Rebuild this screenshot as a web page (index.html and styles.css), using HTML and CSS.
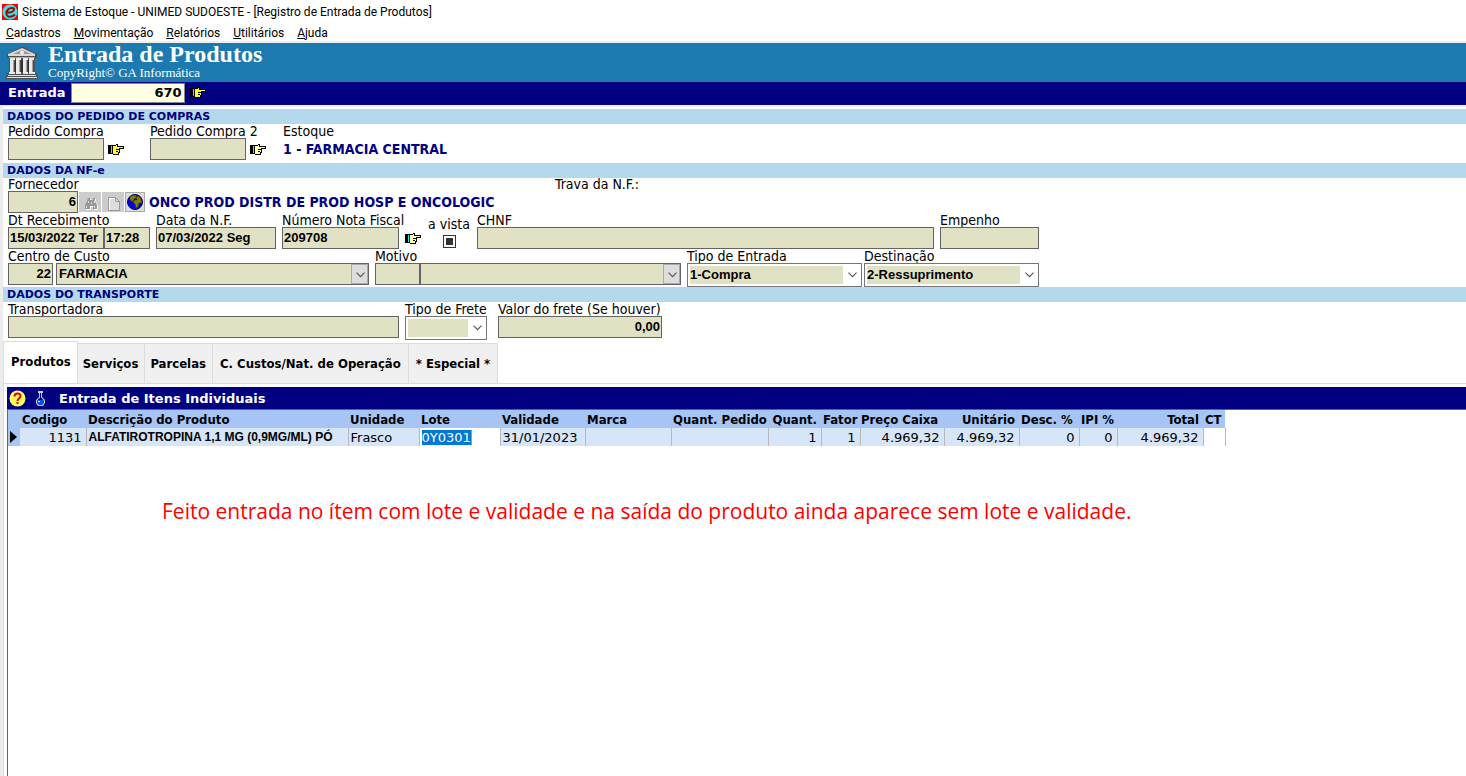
FILE: index.html
```html
<!DOCTYPE html>
<html lang="pt-BR">
<head>
<meta charset="utf-8">
<title>Sistema de Estoque - UNIMED SUDOESTE</title>
<link rel="stylesheet" href="styles.css">
</head>
<body>
<svg class="defs" aria-hidden="true">
  <symbol id="hand" viewBox="0 0 16 11">
    <path fill="#000" d="M0 1h5v9H0z"/><path fill="#0ff" d="M3 2h1v7H3z"/>
    <path fill="#000" d="M5 1h3V0h2v2h6v3h-4v4h-1v2H5z"/>
    <path fill="#ffff30" d="M5 2h3V1h1v2h6v1h-4v4h-1v2H5z"/>
    <path fill="#000" d="M8 5h3v1H8zM8 7h2v1H8z"/>
  </symbol>
  <symbol id="hand-pale" viewBox="0 0 16 11">
    <path fill="#000" d="M0 1h5v9H0z"/><path fill="#0ff" d="M3 2h1v7H3z"/>
    <path fill="#000" d="M5 1h3V0h2v2h6v3h-4v4h-1v2H5z"/>
    <path fill="#ffffb0" d="M5 2h3V1h1v2h6v1h-4v4h-1v2H5z"/>
    <path fill="#000" d="M8 5h3v1H8zM8 7h2v1H8z"/>
  </symbol>
  <symbol id="chevron" viewBox="0 0 9 6"><path d="M.5 .7l4 4 4-4" fill="none" stroke="#555" stroke-width="1.1"/></symbol>
</svg>

<header>
  <div class="titlebar">
    <svg width="16" height="16" viewBox="0 0 16 16"><path fill="#f00" d="M0 0h16v16H0z"/><circle cx="8" cy="8" r="7.500" fill="#40e0e0"/><path d="M5 8.500c4 .5 7-1 7-3.200 0-2-4-1.800-6 .2S3.500 11 6 12.300s5 0 7-1.800" fill="none" stroke="#8a1010" stroke-width="2"/></svg>
    <span>Sistema de Estoque - UNIMED SUDOESTE - [Registro de Entrada de Produtos]</span>
  </div>
  <nav class="menu">
    <button><u>C</u>adastros</button><button><u>M</u>ovimentação</button><button><u>R</u>elatórios</button><button><u>U</u>tilitários</button><button><u>A</u>juda</button>
  </nav>
  <div class="banner">
    <svg width="32" height="32" viewBox="0 0 32 32">
      <path fill="#505050" d="M15 0h3l13 7v4h-2v15h2l1 6H0l1-6h2V11H1V7z"/>
      <path fill="#d8d8d8" d="M16 1l13 6v2H2V7z"/><path fill="#999" d="M16 3l9 4H7z"/><circle cx="16" cy="5.500" r="2" fill="#eee"/>
      <path fill="#aaa" d="M3 10h26v1H3z"/>
      <path fill="#303030" d="M9 13h1v12H9zM15 13h2v12h-2zM22 13h1v12h-1z"/>
      <path fill="#eaeaea" d="M4 11h5v2H4zM10 11h5v2h-5zM17 11h5v2h-5zM23 11h5v2h-5zM4 13h3v12H4zM10 13h3v12h-3zM17 13h3v12h-3zM23 13h3v12h-3zM3 25h6v2H3zM10 25h5v2h-5zM17 25h5v2h-5zM23 25h6v2h-6z"/>
      <path fill="#a0a0a0" d="M7 13h1v12H7zM13 13h1v12h-1zM20 13h1v12h-1zM26 13h1v12h-1z"/>
      <path fill="#e0e0e0" d="M2 28h28v1H2zM1 30h30v1H1z"/>
    </svg>
    <div><h1>Entrada de Produtos</h1><p>CopyRight© GA Informática</p></div>
  </div>
  <div class="entry">
    <label for="entrada">Entrada</label>
    <input id="entrada" value="670">
    <button class="plain" aria-label="Buscar entrada"><svg width="16" height="11"><use href="#hand"/></svg></button>
  </div>
</header>

<main>
  <h2>DADOS DO PEDIDO DE COMPRAS</h2>
  <div class="row order">
    <div class="field"><label for="pc">Pedido Compra</label>
      <div class="group"><input id="pc"><button class="plain" aria-label="Buscar pedido"><svg width="16" height="11"><use href="#hand"/></svg></button></div></div>
    <div class="field"><label for="pc2">Pedido Compra 2</label>
      <div class="group"><input id="pc2"><button class="plain" aria-label="Buscar pedido 2"><svg width="16" height="11"><use href="#hand-pale"/></svg></button></div></div>
    <div class="field"><span>Estoque</span><div class="group"><strong>1 - FARMACIA CENTRAL</strong></div></div>
  </div>

  <h2>DADOS DA NF-e</h2>
  <div class="row supplier">
    <div class="field"><label for="forn">Fornecedor</label>
      <div class="group tools"><input id="forn" class="num" value="6">
        <button class="tool off" aria-label="Procurar" disabled><svg width="13" height="12" viewBox="0 0 13 12"><path fill="#fff" d="M4 1h2v2h2V1h3v3l2 4v4H9V9H6v3H1V7l2-3z"/><path fill="#999" d="M3 0h2v2h3V0h2v3l2 4v4H8V8H5v3H0V7l2-4z"/><path fill="#ddd" d="M3 3h1v2H3zM9 3h1v2H9zM1 8h1v2H1zM9 8h1v2H9zM6 4h1v2H6z"/></svg></button>
        <button class="tool off" aria-label="Novo" disabled><svg width="12" height="14" viewBox="0 0 12 14"><path fill="#ddd" stroke="#999" d="M.5 .5h7l4 4v9H.5z"/><path d="M7.500 .5v4h4" fill="none" stroke="#999"/><path d="M1.500 13V1.500H7" fill="none" stroke="#fff"/></svg></button>
        <button class="tool" aria-label="Consultar na internet"><svg width="16" height="16" viewBox="0 0 16 16"><circle cx="8" cy="8" r="7.500" fill="#0000e0" stroke="#000060"/><path fill="#808000" stroke="#303000" stroke-width=".5" d="M3 3l3-2 4 1-1 2-2 1-1 3-3-2zM9 3l3-1 2 3 1 4-3 0-1 4-2 1-1-4-2-2 2-2 2 0z"/></svg></button>
        <strong>ONCO PROD DISTR DE PROD HOSP E ONCOLOGIC</strong></div></div>
    <div class="field"><span>Trava da N.F.:</span></div>
  </div>
  <div class="row invoice">
    <div class="field"><label for="dtr">Dt Recebimento</label>
      <div class="group joined"><input id="dtr" value="15/03/2022 Ter"><input class="time" aria-label="Hora" value="17:28"></div></div>
    <div class="field"><label for="dnf">Data da N.F.</label><input id="dnf" value="07/03/2022 Seg"></div>
    <div class="field"><label for="nnf">Número Nota Fiscal</label><input id="nnf" value="209708"></div>
    <div class="field end"><button class="plain" aria-label="Buscar nota"><svg width="16" height="11"><use href="#hand-pale"/></svg></button></div>
    <div class="field cash"><label for="av">a vista</label><input type="checkbox" id="av"></div>
    <div class="field"><label for="chnf">CHNF</label><input id="chnf"></div>
    <div class="field"><label for="emp">Empenho</label><input id="emp"></div>
  </div>
  <div class="row cost">
    <div class="field"><label for="cc">Centro de Custo</label>
      <div class="group spaced"><input id="cc" class="num code" value="22">
        <div class="pick filled"><select aria-label="Nome do centro de custo"><option>FARMACIA</option></select><svg><use href="#chevron" x="4" y="7" width="9" height="6"/></svg></div></div></div>
    <div class="field"><label for="mot">Motivo</label>
      <div class="group"><input id="mot" class="code"><div class="pick filled"><select aria-label="Descrição do motivo"><option></option></select><svg><use href="#chevron" x="4" y="7" width="9" height="6"/></svg></div></div></div>
    <div class="pair">
      <div class="field"><label for="te">Tipo de Entrada</label>
        <div class="pick"><select id="te"><option>1-Compra</option></select><svg><use href="#chevron" x="4" y="8" width="9" height="6"/></svg></div></div>
      <div class="field"><label for="des">Destinação</label>
        <div class="pick"><select id="des"><option>2-Ressuprimento</option></select><svg><use href="#chevron" x="4" y="8" width="9" height="6"/></svg></div></div>
    </div>
  </div>

  <h2>DADOS DO TRANSPORTE</h2>
  <div class="row freight">
    <div class="field"><label for="tra">Transportadora</label><input id="tra"></div>
    <div class="field"><label for="tf">Tipo de Frete</label>
      <div class="pick"><select id="tf"><option></option></select><svg><use href="#chevron" x="4" y="8" width="9" height="6"/></svg></div></div>
    <div class="field"><label for="vf">Valor do frete (Se houver)</label><input id="vf" class="num" value="0,00"></div>
  </div>

  <div class="tabs" role="tablist">
    <button role="tab" aria-selected="true">Produtos</button><button role="tab">Serviços</button><button role="tab">Parcelas</button><button role="tab">C. Custos/Nat. de Operação</button><button role="tab">* Especial *</button>
  </div>
  <section class="panel">
    <div class="grid-title">
      <svg width="17" height="17" viewBox="0 0 17 17"><circle cx="8.500" cy="8.500" r="8" fill="#ffff60"/><path d="M5.500 6.500C5.500 2.500 11.500 2.500 11.500 6c0 2.500-3 2.500-3 5" fill="none" stroke="#e00000" stroke-width="2"/><path fill="#e00000" d="M7.500 12h2v2h-2z"/></svg>
      <svg width="11" height="15" viewBox="0 0 11 15"><path fill="#c8c8c8" d="M3 0h5v2H7v4l3 3v3l-2 3H3L1 12V9l3-3V2H3z"/><path fill="#000080" d="M5 2h1v5H5zM3 8l2-1h2l1 2H3z"/><path fill="#0050ff" d="M2 9h7v3l-2 2H4l-2-2z"/><path fill="#fff" d="M3 10h2v1H3z"/></svg>
      <h3>Entrada de Itens Individuais</h3>
    </div>
    <div class="grid">
      <table>
        <colgroup><col class="w12"><col class="w66"><col class="w262"><col class="w71"><col class="w81"><col class="w85"><col class="w86"><col class="w97"><col class="w53"><col class="w39"><col class="w84"><col class="w75"><col class="w60"><col class="w38"><col class="w86"><col class="w22"></colgroup>
        <thead><tr><th></th><th>Codigo</th><th>Descrição do Produto</th><th>Unidade</th><th>Lote</th><th>Validade</th><th>Marca</th><th>Quant. Pedido</th><th class="r">Quant.</th><th>Fator</th><th class="wide">Preço Caixa</th><th class="r">Unitário</th><th>Desc. %</th><th>IPI %</th><th class="r">Total</th><th>CT</th></tr></thead>
        <tbody><tr><td class="mark"><svg width="7" height="12" viewBox="0 0 7 12"><path d="M0 0l7 6-7 6z"/></svg></td><td class="r">1131</td><td class="name">ALFATIROTROPINA 1,1 MG (0,9MG/ML) PÓ</td><td>Frasco</td><td class="edit"><mark>0Y0301</mark></td><td>31/01/2023</td><td></td><td></td><td class="r">1</td><td class="r">1</td><td class="r">4.969,32</td><td class="r">4.969,32</td><td class="r">0</td><td class="r">0</td><td class="r">4.969,32</td><td class="edit"></td></tr></tbody>
      </table>
      <p class="note">Feito entrada no ítem com lote e validade e na saída do produto ainda aparece sem lote e validade.</p>
    </div>
  </section>
</main>
</body>
</html>
```
FILE: styles.css
```css
* { box-sizing: border-box; }
body {
  margin: 0; min-height: 100vh; display: flex; flex-direction: column;
  background: #fff; color: #000; font: 14px/14px "DejaVu Sans Condensed", "DejaVu Sans", Verdana, sans-serif;
}
h1, h2, h3, p { margin: 0; }
button { border: 0; background: none; padding: 0; color: inherit; font: inherit; }
svg { display: block; flex: none; }
.defs { position: absolute; width: 0; height: 0; }

.titlebar, .menu { font: 12px/18px Roboto, "Open Sans", sans-serif; display: flex; align-items: center; }
.titlebar { height: 24px; gap: 4px; padding-left: 2px; }
.menu { height: 19px; gap: 13px; padding-left: 6px; border-bottom: 2px solid #f0f0f0; }
.banner { display: flex; align-items: center; gap: 10px; height: 39px; padding-left: 6px; background: #1c7ab0; color: #fff; font-family: "Liberation Serif", serif; }
.banner div { padding-bottom: 3px; }
.banner h1 { font-size: 24px; line-height: 23px; }
.banner p { font-size: 13px; line-height: 13px; }
.entry { display: flex; align-items: center; gap: 5px; height: 23px; padding: 0 0 2px 8px; background: #000080; color: #fff; font: bold 13px "DejaVu Sans", sans-serif; }
.entry input { width: 114px; height: 20px; padding: 0 2px; border: 1px solid #888; background: #ffffe1; font: inherit; text-align: right; }

main { flex: 1; display: flex; flex-direction: column; border-left: 3px solid #ececec; border-top: 2px solid #f0f0f0; padding-top: 2px; }
h2 { height: 15px; padding-left: 4px; background: #b5d9ec; color: #000080; font: bold 11px/16px "DejaVu Sans", sans-serif; }
.row { display: grid; column-gap: 6px; padding-left: 5px; white-space: nowrap; }
.order { grid-template-columns: 136px 127px auto; padding-bottom: 3px; }
.supplier { grid-template-columns: 541px auto; line-height: 13px; }
.invoice { grid-template-columns: 142px 120px 117px 16px 44px 457px 99px; }
.cost { grid-template-columns: 361px 306px 352px; }
.pair { display: grid; grid-template-columns: 1fr 1fr; gap: 2px; }
.freight { grid-template-columns: 391px 87px 164px; }
.field { display: flex; flex-direction: column; min-width: 0; }
.group { display: flex; align-items: center; gap: 4px; height: 22px; }
.tools { gap: 1px; }
.joined, .cost .group { gap: 0; }
.cost .group { align-items: flex-start; }
.cost .spaced { gap: 3px; }
strong { color: #000080; font-weight: bold; line-height: 20px; }
.tools strong { padding-left: 3px; }

.row input:not([type]), .pick.filled select { height: 22px; padding: 0 1px 2px; border: 1px solid #646464; border-radius: 0; background: #e1e1c3; font: bold 13px "Liberation Sans", Arial, sans-serif; }
.order input { width: 96px; }
.tools input { width: 70px; }
.joined input { width: 96px; }
.joined .time { width: 46px; }
.row .code { width: 45px; }
.row .num { text-align: right; }
.end { justify-content: flex-end; padding-bottom: 5px; }
.cash { justify-content: flex-end; align-items: center; gap: 4px; padding-bottom: 1px; }
.cash input { appearance: none; width: 13px; height: 13px; margin: 0; padding: 2px; border: 1px solid #333; background: #333 content-box; }
.tool { display: grid; place-items: center; width: 20px; height: 20px; border: 1px solid #aaa; background: #ddd; }
.tool.off { width: 22px; border-color: #ccc; background: #ccc; padding: 4px 0 0 2px; }

.pick { position: relative; flex: 1; }
.pick select {
  appearance: none; display: block; width: 100%; height: 24px; border: 1px solid #767676; border-radius: 0; color: #000;
  padding: 2px 18px 2px 2px; background: #e1e1c3 content-box; font: bold 13px/16px "Liberation Sans", Arial, sans-serif;
}
.pick svg { position: absolute; right: 1px; top: 1px; width: 17px; height: 20px; pointer-events: none; }
.pick.filled svg { background: #ddd; border: 1px solid #aaa; }
.pick.filled select { padding: 0 20px 2px 2px; background: #e1e1c3; }
.freight .pick { flex: none; width: 82px; }

.tabs { display: flex; align-items: flex-end; height: 43px; padding-top: 1px; }
.tabs button { height: 40px; padding: 0 6px 0 5px; border: 1px solid #dcdcdc; border-width: 1px 1px 0 0; background: #f0f0f0; font: bold 13px "DejaVu Sans Condensed", "DejaVu Sans", sans-serif; white-space: nowrap; }
.tabs [aria-selected] { height: 42px; padding: 0 6px 2px 7px; border-left-width: 1px; background: #fff; }
.tabs button:nth-child(n+4) { padding: 0 7px; }
.panel { flex: 1; display: flex; flex-direction: column; border: 1px solid #dcdcdc; border-width: 1px 0 0 1px; padding: 3px 0 0 3px; }
.grid-title { display: flex; align-items: center; height: 22px; padding-left: 2px; gap: 9px; background: #000080; color: #fff; }
.grid-title h3 { padding-left: 4px; font: bold 13px "DejaVu Sans", sans-serif; }
.grid { flex: 1; border: 1px solid #646464; border-width: 1px 0 0 1px; }
table { border-collapse: collapse; table-layout: fixed; width: 1217px; font: 13px/17px "DejaVu Sans", sans-serif; }
th, td { height: 18px; padding: 0 2px; overflow: hidden; text-align: left; white-space: nowrap; }
th { background: #a6c5f4; font-family: "DejaVu Sans Condensed", "DejaVu Sans", sans-serif; }
td { background: #d6e5f8; border-right: 1px solid #b8b8b8; }
th.r, td.r { text-align: right; padding-right: 4px; }
th.wide { padding-left: 1px; }
.mark { background: #a6c5f4; border: 0; }
td.name { font: bold 12px "Liberation Sans", Arial, sans-serif; }
td.edit { background: #fff; }
mark { background: #0078d7; color: #fff; border-right: 1px solid #f80; }
.w12 { width: 12px; } .w66 { width: 66px; } .w262 { width: 262px; } .w71 { width: 71px; }
.w81 { width: 81px; } .w85 { width: 85px; } .w86 { width: 86px; } .w97 { width: 97px; }
.w53 { width: 53px; } .w39 { width: 39px; } .w84 { width: 84px; } .w75 { width: 75px; }
.w60 { width: 60px; } .w38 { width: 38px; } .w22 { width: 22px; }
.note { padding: 50px 0 0 154px; color: #f00; font: 21px/30px "Open Sans", "Noto Sans", sans-serif; }
```
